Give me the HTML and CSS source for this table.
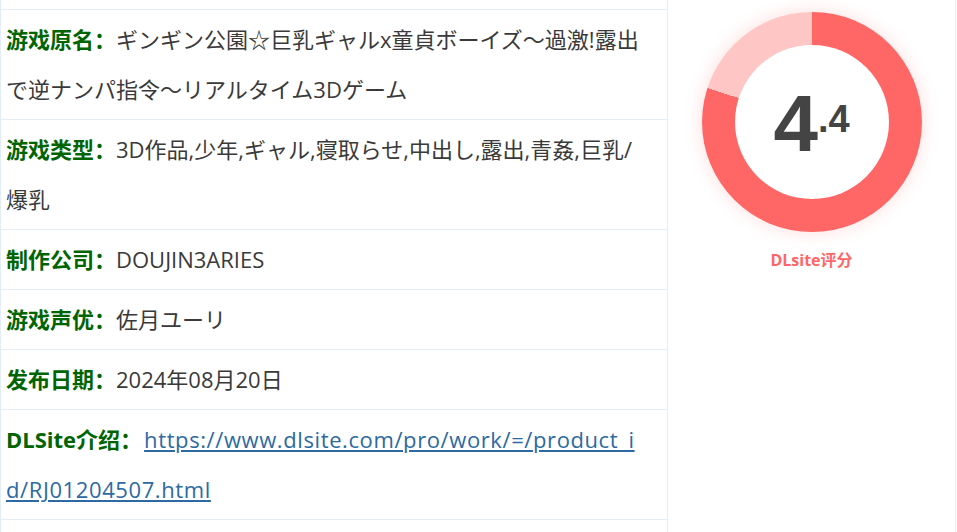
FILE: index.html
```html
<!DOCTYPE html>
<html lang="zh">
<head>
<meta charset="utf-8">
<link rel="stylesheet" href="styles.css">
</head>
<body>
<div class="wrap">
  <div class="info">
    <div class="row row-cut"></div>
    <div class="row"><span class="lbl">游戏原名：</span>ギンギン公園☆巨乳ギャルx童貞ボーイズ～過激!露出で逆ナンパ指令～リアルタイム3Dゲーム</div>
    <div class="row"><span class="lbl">游戏类型：</span>3D作品,少年,ギャル,寝取らせ,中出し,露出,青姦,巨乳/爆乳</div>
    <div class="row"><span class="lbl">制作公司：</span>DOUJIN3ARIES</div>
    <div class="row"><span class="lbl">游戏声优：</span>佐月ユーリ</div>
    <div class="row"><span class="lbl">发布日期：</span>2024年08月20日</div>
    <div class="row"><span class="lbl">DLSite介绍：</span><a class="link" href="#">https://www.dlsite.com/pro/work/=/product_id/RJ01204507.html</a></div>
    <div class="row row-end"></div>
  </div>
  <div class="side">
    <div class="donut">
      <div class="hole">
        <span class="big">4</span><span class="small">.4</span>
      </div>
    </div>
    <div class="caption">DLsite评分</div>
  </div>
</div>
</body>
</html>
```

FILE: styles.css
```css
html, body {
  margin: 0;
  padding: 0;
  background: #fff;
}
.wrap {
  display: flex;
  width: 956px;
  height: 532px;
  overflow: hidden;
}
.info {
  width: 666px;
  border-left: 1px solid #e3edf6;
  border-right: 1px solid #e3edf6;
  font-family: "Open Sans", "Noto Sans CJK SC", sans-serif;
  font-size: 22px;
  color: #3a3a3a;
  flex: none;
  display: flex;
  flex-direction: column;
}
.row {
  border-bottom: 1px solid #e3edf6;
  padding: 4px 17px 5px 5px;
  line-height: 50px;
  word-break: break-all;
}
.row-cut {
  height: 10px;
  padding: 0;
  box-sizing: border-box;
}
.row-end {
  flex: 1;
  border-bottom: none;
}
.lbl {
  color: #006400;
  font-weight: bold;
}
.link {
  color: #2d6aa3;
  text-decoration: underline;
  margin-left: 2px;
  letter-spacing: 0.6px;
}
.side {
  flex: 1;
  border-right: 1px solid #e3edf6;
  display: flex;
  flex-direction: column;
  align-items: center;
  padding-top: 12px;
}
.donut {
  width: 220px;
  height: 220px;
  border-radius: 50%;
  background: conic-gradient(#ff6666 0 80%, #ffc6c6 80% 100%);
  box-shadow: 0 0 18px rgba(255, 102, 102, 0.22);
  display: flex;
  align-items: center;
  justify-content: center;
}
.hole {
  width: 154px;
  height: 154px;
  border-radius: 50%;
  background: #fff;
  display: flex;
  align-items: baseline;
  justify-content: center;
  align-content: center;
  flex-wrap: wrap;
  font-family: "Liberation Sans", Arial, sans-serif;
  font-weight: bold;
  color: #444;
  line-height: 1;
  padding: 4px 0 0 0;
  box-sizing: border-box;
}
.big {
  font-size: 80px;
}
.small {
  font-size: 38px;
  position: relative;
  top: -19px;
}
.caption {
  margin-top: 17px;
  font-family: "Open Sans", "Noto Sans CJK SC", sans-serif;
  font-weight: bold;
  font-size: 16px;
  color: #ff6666;
  line-height: 22px;
}
```
